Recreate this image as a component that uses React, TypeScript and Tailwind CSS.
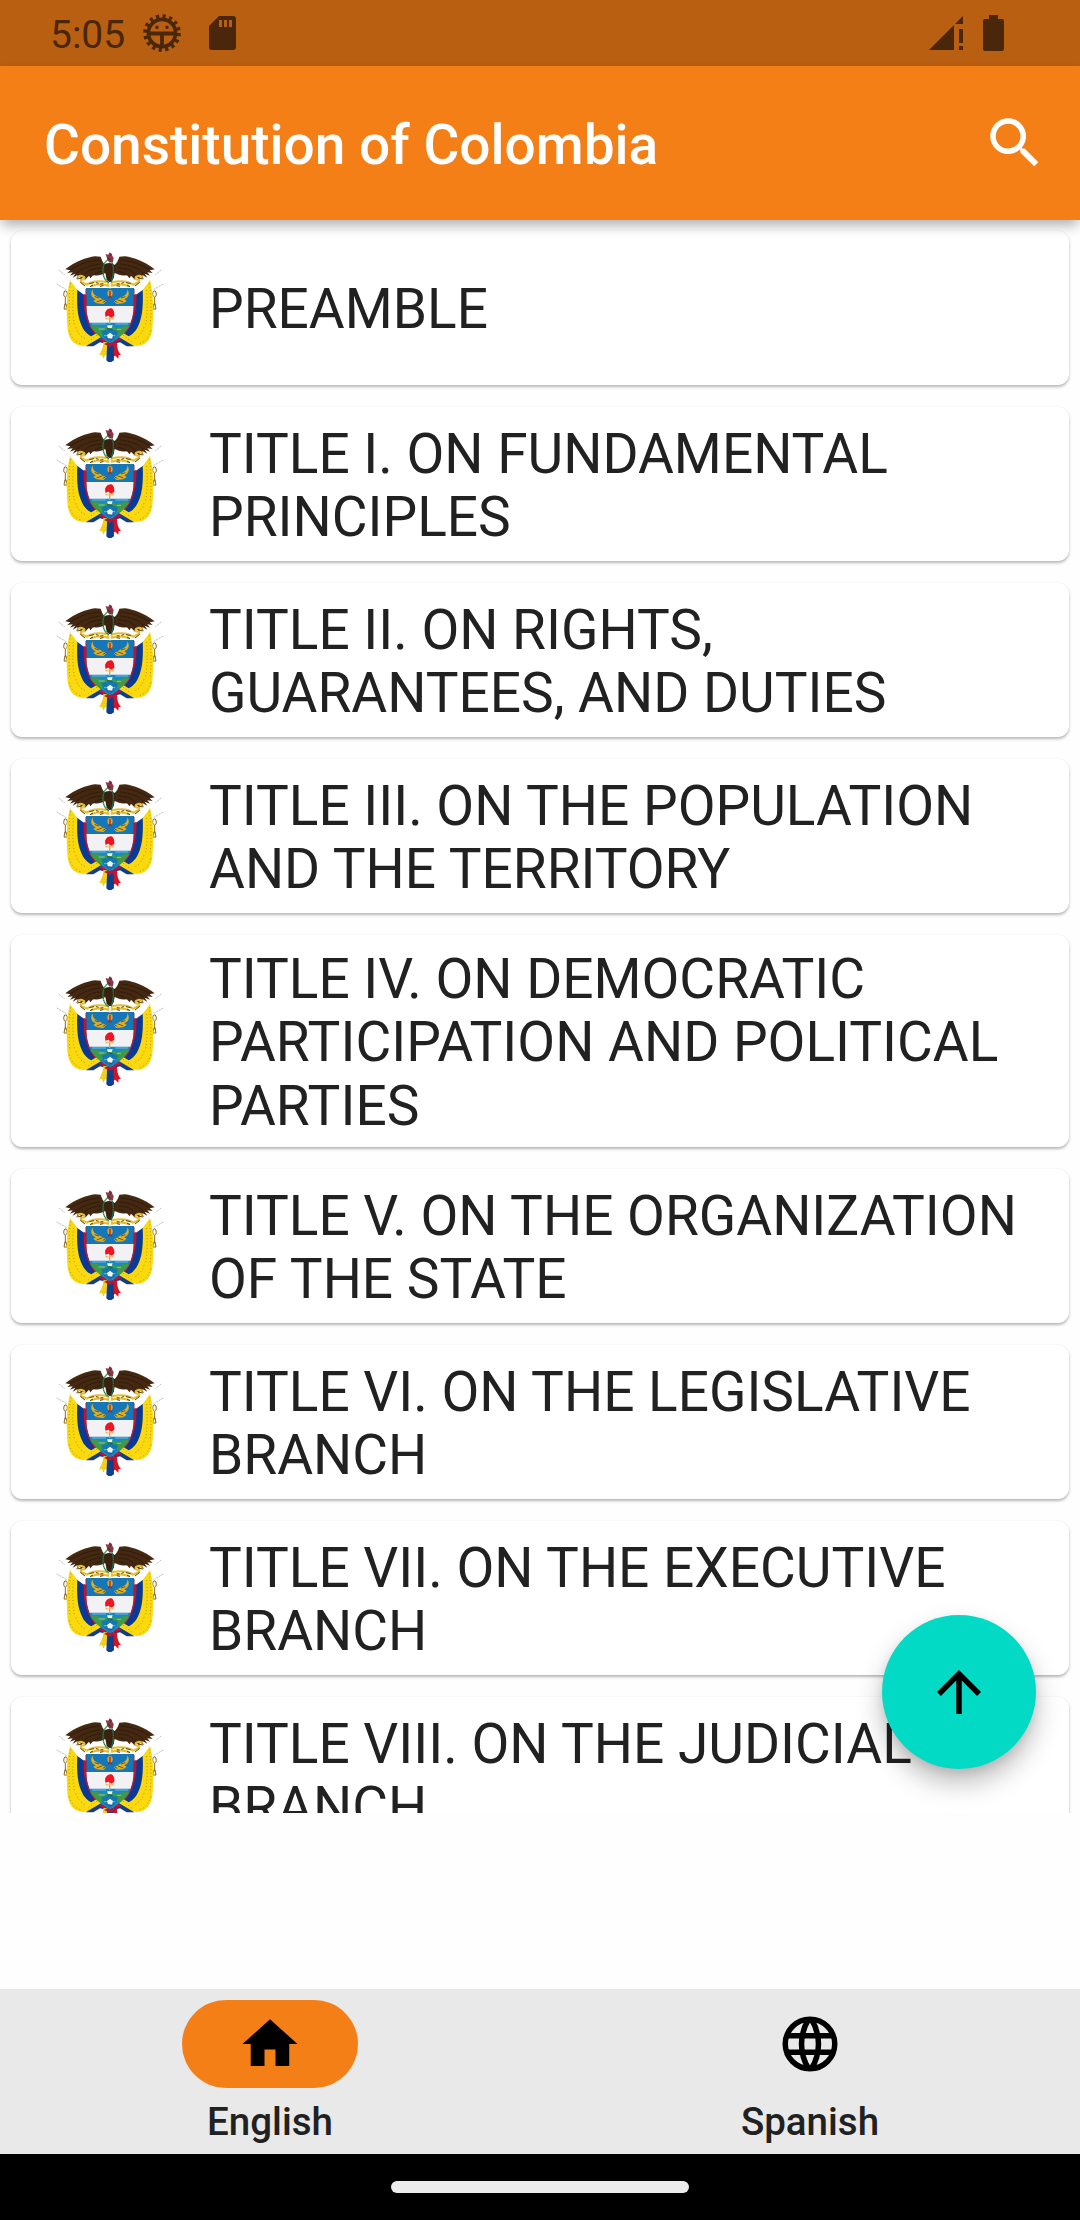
import { useState } from "react";

const TITLES = [
  "PREAMBLE",
  "TITLE I. ON FUNDAMENTAL PRINCIPLES",
  "TITLE II. ON RIGHTS, GUARANTEES, AND DUTIES",
  "TITLE III. ON THE POPULATION AND THE TERRITORY",
  "TITLE IV. ON DEMOCRATIC PARTICIPATION AND POLITICAL PARTIES",
  "TITLE V. ON THE ORGANIZATION OF THE STATE",
  "TITLE VI. ON THE LEGISLATIVE BRANCH",
  "TITLE VII. ON THE EXECUTIVE BRANCH",
  "TITLE VIII. ON THE JUDICIAL BRANCH",
];

// One half of the emblem: wing, ribbon, flags and lances. Mirrored for the right side.
const EmblemSide: React.FC = () => (
  <>
    <path d="M56 90l18 14M50 132l30 17" stroke="#9aa3bd" strokeWidth="2" strokeDasharray="7 2" />
    <path
      d="M74 153c-5 8-3 17 2 19c6-4 8-12 3-19zM76 172v24M72 207l3-16h3l4 16z"
      fill="none"
      stroke="#8a6a1c"
      strokeWidth="3"
    />
    <path d="M88 121L108 118L160 170L150 190L96 150z" fill="#fff" stroke="#e4e4e4" />
    <path d="M137 128L185 150V270L160 262L135 200z" fill="#fff" />
    <path
      d="M107 146L137 168C137 200 142 230 165 255L188 282L160 300C130 290 116 263 112 238C106 205 107 175 107 146z"
      fill="#0a3a94"
    />
    <path d="M131 162L142 165C138 210 150 240 180 272L164 282C138 250 128 205 131 162z" fill="#c8102e" />
    <path
      d="M90 121L112 150C110 190 112 225 122 250C130 272 142 284 154 289L174 277L187 289C170 306 150 318 128 318C102 316 88 300 83 270C79 225 78 165 90 121z"
      fill="#fad90f"
    />
    <path d="M137 319L185 290L202 303L196 311L180 307L160 319z" fill="#123d8c" />
    <path d="M176 300L190 290L204 298L200 308z" fill="#c8102e" />
    <path
      d="M145 306L176 281M92 130c-6 40-6 90-2 130M88 272c6 22 18 36 38 40M100 150c-3 40-2 75 4 110M108 262c4 16 14 28 28 34"
      fill="none"
      stroke="#b8930a"
      strokeWidth="3"
      strokeDasharray="3 7"
    />
    <path
      d="M210 78C198 78 190 75 182 50L165 49C139 53 106 64 76 88L91 91L82 99L98 97L90 107L106 101L98 113L113 105L109 118L122 108L121 120L134 108L135 119L147 107L151 115L160 105C172 109 185 105 194 100L210 100z"
      fill="#442811"
    />
    <path
      d="M178 60C150 62 118 72 92 89M180 72C155 74 128 83 110 100M184 84C163 84 145 90 134 104M184 94c-10 2-18 6-24 12"
      fill="none"
      stroke="#251407"
      strokeWidth="2.5"
      strokeDasharray="6 2"
    />
    <path
      d="M113 113c3-8 12-6 17-3c6 4 4 9-2 9c-8-1-8 5-2 8l15 7c13-10 34-13 64-7v10c-24-6-42-3-54 3"
      fill="none"
      stroke="#e5bd2a"
      strokeWidth="6"
    />
    <path
      d="M112 117l12-3M121 127l14 11M148 131l14-3M168 128l8 2M181 132l9-1M150 140l9-5M180 139l10-2"
      stroke="#5a410c"
      strokeWidth="3"
    />
  </>
);

const Emblem: React.FC = () => (
  <svg viewBox="45 39 330 330" className="size-[110px] shrink-0 overflow-visible">
    <EmblemSide />
    <g transform="matrix(-1 0 0 1 420 0)">
      <EmblemSide />
    </g>

    {/* tassels under the shield */}
    <path d="M190 305L204 308L205 350L196 345L190 356L186 344L177 347C184 332 190 322 190 305z" fill="#f2cf1c" />
    <path d="M216 310L232 307C230 322 235 336 243 345L236 345L235 356L226 347L218 352z" fill="#d31427" />
    <path d="M202 306h18l2 55l-8 5h-9l-6-5z" fill="#0d3f8f" />
    <path d="M192 312l18-9l18 9l-18 8z" fill="#b91530" />

    {/* shield */}
    <path d="M138 144H282L281 199H139z" fill="#1577b8" />
    <path d="M138 198H282C281 217 278 235 272 249H148C142 235 139 217 138 198z" fill="#f2f1f3" />
    <path d="M147 248H273C259 276 236 296 210 310C184 296 160 276 147 248z" fill="#1688c4" />
    <path
      d="M151 258C165 251 178 263 190 262C202 258 218 258 230 264C243 262 256 252 268 260C257 275 247 284 238 290L219 276L199 277L182 290C168 282 157 270 151 258z"
      fill="#3d9a4c"
    />
    <path d="M184 275c16-9 34-9 51 0l-12 22l-13 10l-14-10z" fill="#1477b0" />
    <path d="M156 252h42M226 252h38M176 267h18M231 268h12M192 287h34" stroke="#a9d6ea" strokeWidth="2" />
    <path d="M201 256h17l-3 8h-11zM201 285l9-7l9 7l-3 11h-12z" fill="#f1f5fa" />
    <path d="M201 266l17 3M202 295l14 3" stroke="#15385e" strokeWidth="2" />
    <path d="M138 147v55c0 18 4 33 9 46M282 147v55c0 18-4 33-9 46" fill="none" stroke="#8d2947" strokeWidth="3" />

    {/* liberty cap on its lance */}
    <path d="M209 229v23" stroke="#dba43a" strokeWidth="4" />
    <path d="M197 232l7 4l5-3l6 3l5-4v6h-23z" fill="#f0b252" />
    <path d="M196 230l-1-12c4-10 12-14 20-13c6 3 9 13 8 22l-9 6l-8-6z" fill="#ee1521" />

    {/* cornucopias and pomegranate */}
    <path
      d="M158 148c-1 14 8 21 22 25l18 11l-7 8l-21-2l-10-7l7-5c-14-5-17-19-9-30zM262 148c1 14-8 21-22 25l-18 11l7 8l21-2l10-7l-7-5c14-5 17-19 9-30z"
      fill="#dcae29"
    />
    <path d="M164 170l13 4M170 186l18-7M188 187l7-3M256 170l-13 4M250 186l-18-7M232 187l-7-3" stroke="#6a5b14" strokeWidth="3" />
    <ellipse cx="210" cy="160" rx="8" ry="10" fill="#dca12a" />
    <path d="M210 152v17M205 175l5-6l5 6" stroke="#b32525" strokeWidth="4" fill="none" />

    {/* condor body, head and laurel crown */}
    <path d="M192 76C198 66 219 66 226 78L222 112L213 129L200 120z" fill="#38220f" />
    <path d="M200 52l-3-10l8 2l4-7l7 5l1 6l4 6l-2 12l-10 2l-7-8z" fill="#8d3541" />
    <path d="M203 54l8 6M209 43l4 4" stroke="#29252c" strokeWidth="3" />
    <path d="M205 58C190 66 187 88 190 105C193 117 199 124 207 128M214 63C222 77 223 104 213 126" fill="none" stroke="#187d4a" strokeWidth="4" strokeDasharray="5 1" />
    <path d="M210 126v19" stroke="#e7edf2" strokeWidth="7" />
  </svg>
);

const StatusBar: React.FC = () => (
  <div className="flex h-[66px] items-center bg-[#b85f11] pl-[50px] pr-[76px] text-[#4a260a]">
    <span className="w-[92px] pt-[5px] text-[39px] leading-none">5:05</span>
    <svg viewBox="0 0 40 40" className="size-10" fill="none" stroke="currentColor">
      <circle cx="20" cy="20" r="13.6" strokeWidth="3.6" />
      <circle cx="20" cy="20" r="16.8" strokeWidth="4" strokeDasharray="3.2 3.4" />
      <path d="M6 20.5h28M20 21v14" strokeWidth="3.8" />
      <path d="M13.5 14.3h3M23.5 14.3h3" strokeWidth="3" />
    </svg>
    <svg viewBox="0 0 27 34" className="ml-[27px] h-[34px] w-[27px]" fill="currentColor">
      <path
        fillRule="evenodd"
        d="M10 0h14a3 3 0 0 1 3 3v28a3 3 0 0 1-3 3H3a3 3 0 0 1-3-3V10zM10 4v7h3V4zM15 4v7h3V4zM20 4v7h3V4z"
      />
    </svg>
    <svg viewBox="0 0 34 34" className="ml-auto size-[34px]" fill="currentColor">
      <path d="M34 0v8h-8zM25 9v25H0zM30 13h4v14h-4zM30 30h4v4h-4z" />
    </svg>
    <svg viewBox="0 0 21 36" className="ml-5 h-9 w-[21px]" fill="currentColor">
      <path d="M6 0h9v4h4a2 2 0 0 1 2 2v28a2 2 0 0 1-2 2H2a2 2 0 0 1-2-2V6a2 2 0 0 1 2-2h4z" />
    </svg>
  </div>
);

const HomeIcon: React.FC = () => (
  <svg viewBox="0 0 24 24" className="size-[66px]" fill="currentColor">
    <path d="M10 20v-6h4v6h5v-8h3L12 3 2 12h3v8z" />
  </svg>
);

const GlobeIcon: React.FC = () => (
  <svg viewBox="0 0 24 24" className="size-[66px]" fill="none" stroke="currentColor" strokeWidth="2">
    <circle cx="12" cy="12" r="9" />
    <path d="M3.6 9h16.8M3.6 15h16.8M11.5 3a17 17 0 0 0 0 18M12.5 3a17 17 0 0 1 0 18" />
  </svg>
);

const TABS = [
  { label: "English", Icon: HomeIcon },
  { label: "Spanish", Icon: GlobeIcon },
];

const App: React.FC = () => {
  const [tab, setTab] = useState("English");

  return (
    <div className="relative flex h-[2220px] w-[1080px] flex-col overflow-hidden bg-[#fefefe] font-[Roboto,sans-serif] text-[#212121]">
      <StatusBar />
      <header className="relative z-10 flex h-[154px] items-center justify-between bg-[#f57f17] pl-11 pr-8 text-white shadow-[0_7px_12px_-2px_rgba(0,0,0,0.32)]">
        <h1 className="pt-1 text-[55px] font-medium leading-none">Constitution of Colombia</h1>
        <svg viewBox="0 0 24 24" className="size-[66px]" fill="currentColor">
          <path d="M15.5 14h-.79l-.28-.27A6.471 6.471 0 0 0 16 9.5 6.5 6.5 0 1 0 9.5 16c1.61 0 3.09-.59 4.23-1.57l.27.28v.79l5 4.99L20.49 19l-4.99-5zm-6 0C7.01 14 5 11.99 5 9.5S7.01 5 9.5 5 14 7.01 14 9.5 11.99 14 9.5 14z" />
        </svg>
      </header>

      <main className="flex h-[1593px] shrink-0 flex-col gap-[22px] overflow-hidden px-[11px] pt-[11px]">
        {TITLES.map((title) => (
          <div
            key={title}
            className="flex min-h-[154px] shrink-0 items-start gap-11 rounded-[11px] bg-white pl-11 pr-8 shadow-[0_2px_3px_rgba(0,0,0,0.28),0_0_2px_rgba(0,0,0,0.06)]"
          >
            {/* centred in short cards, capped at 42px from the top in tall ones */}
            <div className="flex max-h-[194px] items-center self-stretch">
              <Emblem />
            </div>
            <p className="self-center pb-[9px] pt-[13px] text-[55px] leading-[63.3px]">{title}</p>
          </div>
        ))}
      </main>

      <button className="absolute left-[882px] top-[1615px] z-10 flex size-[154px] items-center justify-center rounded-full bg-[#03dac6] text-black shadow-[0_14px_26px_rgba(0,0,0,0.26),0_4px_8px_rgba(0,0,0,0.08)]">
        <svg viewBox="0 0 24 24" className="size-[66px]" fill="currentColor">
          <path d="M4 12l1.41 1.41L11 7.83V20h2V7.83l5.58 5.59L20 12l-8-8z" />
        </svg>
      </button>

      <nav className="mt-auto grid h-[165px] shrink-0 grid-cols-2 bg-[#e9e9e9]">
        {TABS.map(({ label, Icon }) => (
          <button key={label} onClick={() => setTab(label)} className="flex flex-col items-center pt-[11px]">
            <span
              className={
                tab === label
                  ? "flex h-[88px] w-[176px] items-center justify-center rounded-full bg-[#f57f17] text-black"
                  : "flex h-[88px] w-[176px] items-center justify-center text-black"
              }
            >
              <Icon />
            </span>
            <span className="pt-[11px] text-[38.5px] font-medium leading-[45px]">{label}</span>
          </button>
        ))}
      </nav>
      <div className="flex h-[66px] shrink-0 items-center justify-center bg-black">
        <div className="h-3 w-[298px] rounded-full bg-[#ececec]" />
      </div>
    </div>
  );
};

export default App;
